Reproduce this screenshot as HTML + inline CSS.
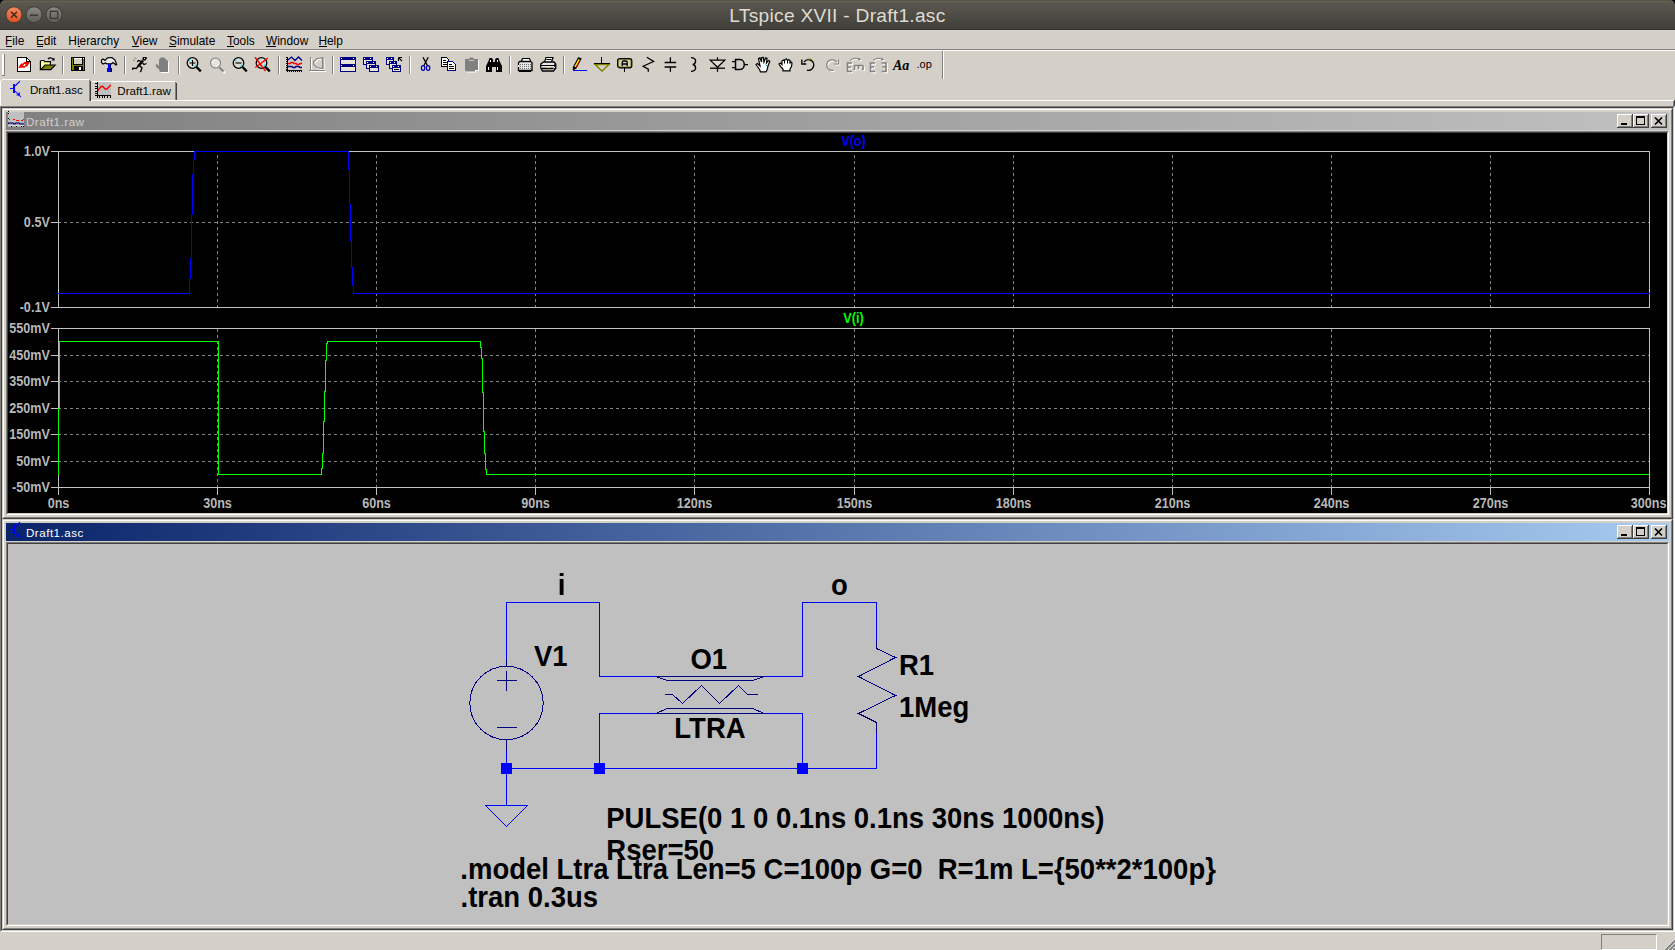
<!DOCTYPE html>
<html>
<head>
<meta charset="utf-8">
<title>LTspice XVII - Draft1.asc</title>
<style>
html,body{margin:0;padding:0;}
body{width:1675px;height:950px;overflow:hidden;background:#d4d0c8;position:relative;font-family:"Liberation Sans",sans-serif;}
.abs{position:absolute;}
#titlebar{left:0;top:0;width:1675px;height:30px;background:#000;}
#titlebar .bg{left:0;top:0;width:1675px;height:30px;border-radius:5px 5px 0 0;background:linear-gradient(#55544c 0px,#55544c 1px,#666250 1px,#666250 2px,#5b5850 2px,#403f3a 29px,#35342f 29px,#35342f 30px);}
#titletext{left:0;top:1px;width:1675px;height:29px;line-height:30px;text-align:center;color:#dfdbd2;font-size:18px;letter-spacing:0.25px;transform:scaleX(1.065);transform-origin:838px 0;}
.wbtn{width:17px;height:17px;border-radius:50%;top:6px;box-sizing:border-box;}
#menubar{left:0;top:29px;width:1675px;height:20px;}
.mi{top:0;height:20px;line-height:23px;font-size:12px;color:#000;white-space:nowrap;}
.mi u{text-decoration:none;border-bottom:1px solid #000;}
#toolbar{left:0;top:51px;width:1675px;height:28px;}
.sep{top:5px;width:1px;height:19px;background:#808080;border-right:1px solid #fff;}
.ico{top:6px;width:16px;height:16px;}
.win{left:2px;width:1671px;height:411px;background:#d4d0c8;box-sizing:border-box;border-style:solid;border-width:1px;border-color:#d4d0c8 #404040 #404040 #d4d0c8;}
.win .in{left:0;top:0;width:1669px;height:409px;box-sizing:border-box;border-style:solid;border-width:1px;border-color:#fff #808080 #808080 #fff;}
.cap{left:3px;top:3px;width:1663px;height:18px;}
.capt{left:20px;top:0px;height:18px;line-height:19px;font-size:11.6px;letter-spacing:0.5px;white-space:nowrap;}
.cbtn{top:2px;width:16px;height:14px;background:#d4d0c8;box-sizing:border-box;border-style:solid;border-width:1px;border-color:#fff #404040 #404040 #fff;}
.cbtn i{position:absolute;left:0;top:0;width:13px;height:11px;box-sizing:border-box;border-style:solid;border-width:0 1px 1px 0;border-color:#808080;}
.client{left:3px;top:22px;width:1663px;height:384px;box-sizing:border-box;border-style:solid;border-width:1px;border-color:#808080 #fff #fff #808080;}
.client .c2{left:0;top:0;width:1661px;height:382px;box-sizing:border-box;border-style:solid;border-width:1px;border-color:#404040 #d4d0c8 #d4d0c8 #404040;}
.yl{left:0;width:48px;text-align:right;font-weight:bold;font-size:13.5px;color:#c0c0c0;line-height:18px;height:18px;white-space:nowrap;}
.xl{font-weight:bold;font-size:13.5px;color:#c0c0c0;line-height:18px;height:18px;white-space:nowrap;}
.st{font-weight:bold;font-size:27.5px;color:#000;line-height:24px;height:24px;white-space:nowrap;}
.stx{font-family:"Liberation Sans",sans-serif;font-weight:bold;font-size:27.5px;fill:#000;white-space:pre;}
.ptx{font-family:"Liberation Sans",sans-serif;font-weight:bold;font-size:13px;white-space:pre;}
.ui{font-family:"Liberation Sans",sans-serif;font-size:11.6px;fill:#000;}
</style>
</head>
<body>
<!-- TITLEBAR -->
<div id="titlebar" class="abs">
  <div class="bg abs"></div>
  <div id="titletext" class="abs">LTspice XVII - Draft1.asc</div>
  <svg class="abs" style="left:0;top:0" width="80" height="29" viewBox="0 0 80 29">
<defs><linearGradient id="gc" x1="0" y1="0" x2="0" y2="1"><stop offset="0" stop-color="#f28a62"/><stop offset="1" stop-color="#de4f21"/></linearGradient><linearGradient id="gg" x1="0" y1="0" x2="0" y2="1"><stop offset="0" stop-color="#8d8c84"/><stop offset="1" stop-color="#5b5a53"/></linearGradient></defs>
<circle cx="14" cy="14.8" r="8" fill="url(#gc)" stroke="#4d392e" stroke-width="1"/>
<circle cx="34" cy="14.8" r="8" fill="url(#gg)" stroke="#3b3a36" stroke-width="1"/>
<circle cx="54" cy="14.8" r="8" fill="url(#gg)" stroke="#3b3a36" stroke-width="1"/>
<path d="M11 11.8L17 17.8M17 11.8L11 17.8" stroke="#3e2a1e" stroke-width="1.5" fill="none"/>
<path d="M30 15.3H38" stroke="#3c3b37" stroke-width="1.6" fill="none"/>
<rect x="50.3" y="11.3" width="7.4" height="7.2" stroke="#3c3b37" stroke-width="1.4" fill="none"/>
</svg>
</div>
<!-- MENUBAR -->
<div id="menubar" class="abs">
<svg class="abs" style="left:0;top:0" width="400" height="20" viewBox="0 29 400 20">
<g class="ui" style="font-size:11.9px">
<text x="5.1" y="45">File</text><text x="35.9" y="45">Edit</text><text x="68.3" y="45">Hierarchy</text><text x="131.8" y="45">View</text>
<text x="169" y="45">Simulate</text><text x="227" y="45">Tools</text><text x="266" y="45">Window</text><text x="318.4" y="45">Help</text>
</g>
<g shape-rendering="crispEdges" fill="#000">
<rect x="6" y="46" width="6" height="1"/><rect x="37" y="46" width="6" height="1"/><rect x="78" y="46" width="2" height="1"/><rect x="132" y="46" width="7" height="1"/>
<rect x="169" y="46" width="7" height="1"/><rect x="227" y="46" width="7" height="1"/><rect x="266" y="46" width="10" height="1"/><rect x="319" y="46" width="8" height="1"/>
</g>
</svg>
</div>
<div class="abs" style="left:0;top:49px;width:1675px;height:1px;background:#808080"></div>
<div class="abs" style="left:0;top:50px;width:1675px;height:1px;background:#fff"></div>
<!-- TOOLBAR -->
<div id="toolbar" class="abs">
<svg class="abs" style="left:0;top:0" width="960" height="28" viewBox="0 51 960 28" shape-rendering="crispEdges">
<rect x="2" y="54" width="3" height="22" fill="#fff"/><rect x="4" y="54" width="1" height="22" fill="#808080"/><rect x="2" y="75" width="3" height="1" fill="#808080"/>
<rect x="62" y="56" width="1" height="18" fill="#808080"/><rect x="63" y="56" width="1" height="18" fill="#fff"/>
<rect x="93" y="56" width="1" height="18" fill="#808080"/><rect x="94" y="56" width="1" height="18" fill="#fff"/>
<rect x="124" y="56" width="1" height="18" fill="#808080"/><rect x="125" y="56" width="1" height="18" fill="#fff"/>
<rect x="178" y="56" width="1" height="18" fill="#808080"/><rect x="179" y="56" width="1" height="18" fill="#fff"/>
<rect x="278" y="56" width="1" height="18" fill="#808080"/><rect x="279" y="56" width="1" height="18" fill="#fff"/>
<rect x="332" y="56" width="1" height="18" fill="#808080"/><rect x="333" y="56" width="1" height="18" fill="#fff"/>
<rect x="409" y="56" width="1" height="18" fill="#808080"/><rect x="410" y="56" width="1" height="18" fill="#fff"/>
<rect x="509" y="56" width="1" height="18" fill="#808080"/><rect x="510" y="56" width="1" height="18" fill="#fff"/>
<rect x="563" y="56" width="1" height="18" fill="#808080"/><rect x="564" y="56" width="1" height="18" fill="#fff"/>
<rect x="942" y="51" width="1" height="28" fill="#808080"/><rect x="943" y="51" width="1" height="28" fill="#fff"/>
<g transform="translate(16,57)"><path d="M1.5 .5H10.5L14.5 4.5V14.5H1.5Z" stroke="#000" fill="#fff" stroke-width="1.2" /><path d="M10.5 .5V4.5H14.5" stroke="#000" fill="none" stroke-width="1" /><path d="M2 10.8L5.2 6.6H7L8.2 5H14L11.2 9.5H9.6L8.6 10.8Z" stroke="none" fill="#ff0000" stroke-width="1" shape-rendering="geometricPrecision"/><path d="M6.9 8.9L8.2 7.1H9.8L8.6 8.9Z" stroke="none" fill="#fff" stroke-width="1" shape-rendering="geometricPrecision"/></g>
<g transform="translate(39,57)"><path d="M1.4 12.6V4L2.4 3.5H4.8L5.8 4.7H11.4V8" stroke="#000" fill="#ffff90" stroke-width="1.2" shape-rendering="geometricPrecision"/><path d="M1.6 12.6L6 8H16.2L11.8 12.6Z" stroke="#000" fill="#808000" stroke-width="1.1" shape-rendering="geometricPrecision"/><path d="M9 2Q11.5 -.5 14.5 2.5" stroke="#000" fill="none" stroke-width="1.2" shape-rendering="geometricPrecision"/><path d="M12.5 3.5H15.5V.5Z" stroke="none" fill="#000" stroke-width="1" shape-rendering="geometricPrecision"/></g>
<g transform="translate(70,57)"><rect x="1" y="0" width="14" height="14" fill="#000"/><rect x="2" y="1" width="12" height="12" fill="#808000"/><rect x="4" y="1" width="8" height="6" fill="#d4d0c8"/><rect x="4" y="1" width="8" height="1" fill="#fff"/><rect x="3" y="1" width="1" height="7" fill="#000"/><rect x="12" y="1" width="1" height="7" fill="#000"/><rect x="4" y="7" width="8" height="1" fill="#000"/><rect x="4" y="9" width="9" height="5" fill="#000"/><rect x="9" y="10" width="2" height="3" fill="#fff"/><rect x="13" y="1" width="1" height="1" fill="#fff"/></g>
<g transform="translate(101,57)"><path d="M.5 3L2 2L4 3.5L6.5 .8L11 .5L14 3L15.7 7.5L15 8L12 5.5L10.5 6.8H6L4.5 6L2 7L.5 5.5Z" stroke="#000" fill="#e8e8e8" stroke-width="1.2" shape-rendering="geometricPrecision"/><rect x="7" y="7" width="3" height="4" fill="#0000ff"/><rect x="9" y="7" width="1" height="4" fill="#000080"/><rect x="6" y="11" width="5" height="4" fill="#0000ff"/><rect x="9" y="11" width="2" height="4" fill="#000080"/></g>
<g transform="translate(132,57)"><path d="M11 .5H14.5L13.5 3H11Z" stroke="#000" fill="#000" stroke-width="1" shape-rendering="geometricPrecision"/><rect x="12" y="1" width="1" height="1" fill="#fff"/><path d="M11 3.5L6 9.5" stroke="#000" fill="none" stroke-width="2.6" shape-rendering="geometricPrecision"/><path d="M9.5 4.5L6.5 3.5L5.2 4.8" stroke="#000" fill="none" stroke-width="1.2" shape-rendering="geometricPrecision"/><path d="M10.5 6L12 7.5L14.5 6.5" stroke="#000" fill="none" stroke-width="1.2" shape-rendering="geometricPrecision"/><path d="M6.5 9L4 11.5L.8 11.2L.6 12.8" stroke="#000" fill="none" stroke-width="1.3" shape-rendering="geometricPrecision"/><path d="M8 9L10 11L9 14L8.2 15" stroke="#000" fill="none" stroke-width="1.3" shape-rendering="geometricPrecision"/><path d="M2.5 .8L4.5 1.8M.8 2.8L3 3.8" stroke="#808080" fill="none" stroke-width="1" shape-rendering="geometricPrecision"/></g>
<g transform="translate(155,57)"><g transform="translate(1,1)"><path d="M.5 8L2 7L4 9V2.5L6 .5H9L13 4V15H5L4 12.5L2 11Z" stroke="none" fill="#fff" stroke-width="1" shape-rendering="geometricPrecision"/></g><path d="M.5 8L2 7L4 9V2.5L6 .5H9L13 4V15H5L4 12.5L2 11Z" stroke="none" fill="#808080" stroke-width="1" shape-rendering="geometricPrecision"/></g>
<g transform="translate(186,57)"><circle cx="6.5" cy="6" r="5.3" stroke="#000" fill="#dad8d0" stroke-width="1.25" shape-rendering="geometricPrecision"/><path d="M10.5 10L14.8 14.3" stroke="#000" fill="none" stroke-width="2.4" shape-rendering="geometricPrecision"/><path d="M2.8 4.5L4.5 2.6M8.5 9.5L10.2 7.6" stroke="#00ffff" fill="none" stroke-width="1.2" shape-rendering="geometricPrecision"/><path d="M3.5 6H9.5M6.5 3V9" stroke="#000" fill="none" stroke-width="1.15" shape-rendering="geometricPrecision"/></g>
<g transform="translate(209,57)"><g transform="translate(1,1)"><path d="M11 11L15 15" stroke="#fff" fill="none" stroke-width="2.2" shape-rendering="geometricPrecision"/></g><circle cx="6.5" cy="6" r="5" stroke="#808080" fill="#e4e2dc" stroke-width="1.1" shape-rendering="geometricPrecision"/><path d="M10.5 10.5L14.5 14.5" stroke="#808080" fill="none" stroke-width="2.2" shape-rendering="geometricPrecision"/><path d="M3.5 6Q4 3.5 6.5 3M7 9.5Q9 9 9.8 6.5" stroke="#fff" fill="none" stroke-width="1" shape-rendering="geometricPrecision"/></g>
<g transform="translate(232,57)"><circle cx="6.5" cy="6" r="5.3" stroke="#000" fill="#dad8d0" stroke-width="1.25" shape-rendering="geometricPrecision"/><path d="M10.5 10L14.8 14.3" stroke="#000" fill="none" stroke-width="2.4" shape-rendering="geometricPrecision"/><path d="M2.8 4.5L4.5 2.6M8.5 9.5L10.2 7.6" stroke="#00ffff" fill="none" stroke-width="1.2" shape-rendering="geometricPrecision"/><path d="M3.5 6H9.5" stroke="#000" fill="none" stroke-width="1.15" shape-rendering="geometricPrecision"/></g>
<g transform="translate(255,57)"><circle cx="6.5" cy="6" r="5.3" stroke="#000" fill="#dad8d0" stroke-width="1.25" shape-rendering="geometricPrecision"/><path d="M10.5 10L14.8 14.3" stroke="#000" fill="none" stroke-width="2.4" shape-rendering="geometricPrecision"/><path d="M2.8 4.5L4.5 2.6M8.5 9.5L10.2 7.6" stroke="#00ffff" fill="none" stroke-width="1.2" shape-rendering="geometricPrecision"/><path d="M0 .3L10.5 14M13 1L.3 10.5" stroke="#ff0000" fill="none" stroke-width="1.4" shape-rendering="geometricPrecision"/></g>
<g transform="translate(286,57)"><rect x="1" y="0" width="1" height="14" fill="#000"/><rect x="0" y="13" width="16" height="1" fill="#000"/><rect x="0" y="0" width="1" height="1" fill="#000"/><rect x="0" y="2" width="1" height="1" fill="#000"/><rect x="0" y="4" width="1" height="1" fill="#000"/><rect x="0" y="6" width="1" height="1" fill="#000"/><rect x="0" y="8" width="1" height="1" fill="#000"/><rect x="0" y="10" width="1" height="1" fill="#000"/><rect x="0" y="12" width="1" height="1" fill="#000"/><rect x="1" y="14" width="1" height="1" fill="#000"/><rect x="3" y="14" width="1" height="1" fill="#000"/><rect x="5" y="14" width="1" height="1" fill="#000"/><rect x="7" y="14" width="1" height="1" fill="#000"/><rect x="9" y="14" width="1" height="1" fill="#000"/><rect x="11" y="14" width="1" height="1" fill="#000"/><rect x="13" y="14" width="1" height="1" fill="#000"/><rect x="15" y="14" width="1" height="1" fill="#000"/><path d="M2 3L5.5 0L9 3.5L12.5 0L16 3.5" stroke="#000080" fill="none" stroke-width="1.25" shape-rendering="geometricPrecision"/><path d="M2 6.5H4L5 5.5H7L8 6.5H10L11 7.5H13L14 6.5H16" stroke="#ff0000" fill="none" stroke-width="1.5" shape-rendering="geometricPrecision"/><path d="M2 9.5H6L7 10.5H9L10 9.5H13L14 10.5H16" stroke="#000080" fill="none" stroke-width="1.6" shape-rendering="geometricPrecision"/></g>
<g transform="translate(309,57)"><g transform="translate(1,1)"><rect x="1" y="0" width="1" height="14" fill="#fff"/><rect x="0" y="13" width="16" height="1" fill="#fff"/><path d="M8 1.5L14 .8V11.5L8 10.5L5 8L4.5 5Z" stroke="#fff" fill="none" stroke-width="1.2" shape-rendering="geometricPrecision"/><path d="M13.5 1V12" stroke="#fff" fill="none" stroke-width="1" shape-rendering="geometricPrecision"/></g><rect x="1" y="0" width="1" height="14" fill="#808080"/><rect x="0" y="13" width="16" height="1" fill="#808080"/><path d="M8 1.5L14 .8V11.5L8 10.5L5 8L4.5 5Z" stroke="#808080" fill="none" stroke-width="1.2" shape-rendering="geometricPrecision"/><path d="M13.5 1V12" stroke="#808080" fill="none" stroke-width="1" shape-rendering="geometricPrecision"/></g>
<g transform="translate(340,57)"><rect x="0" y="0" width="16" height="8" fill="#000080"/><rect x="1" y="3" width="14" height="4" fill="#e8e4d8"/><rect x="1" y="1" width="1" height="1" fill="#fff"/><rect x="13" y="1" width="1" height="1" fill="#fff"/><rect x="0" y="7" width="16" height="8" fill="#000080"/><rect x="1" y="10" width="14" height="4" fill="#e8e4d8"/><rect x="1" y="8" width="1" height="1" fill="#fff"/><rect x="13" y="8" width="1" height="1" fill="#fff"/><rect x="13" y="1" width="1" height="1" fill="#fff"/><rect x="13" y="8" width="1" height="1" fill="#fff"/><rect x="15" y="1" width="1" height="1" fill="#000080"/></g>
<g transform="translate(363,57)"><rect x="0" y="0" width="10" height="8" fill="#000080"/><rect x="1" y="3" width="8" height="4" fill="#e8e4d8"/><rect x="1" y="1" width="1" height="1" fill="#fff"/><rect x="7" y="1" width="1" height="1" fill="#fff"/><rect x="3" y="4" width="10" height="8" fill="#000080"/><rect x="4" y="7" width="8" height="4" fill="#e8e4d8"/><rect x="4" y="5" width="1" height="1" fill="#fff"/><rect x="10" y="5" width="1" height="1" fill="#fff"/><rect x="6" y="8" width="10" height="7" fill="#000080"/><rect x="7" y="11" width="8" height="3" fill="#e8e4d8"/><rect x="7" y="9" width="1" height="1" fill="#fff"/><rect x="13" y="9" width="1" height="1" fill="#fff"/></g>
<g transform="translate(386,57)"><rect x="0" y="0" width="8" height="8" fill="#000080"/><rect x="1" y="3" width="6" height="4" fill="#e8e4d8"/><rect x="1" y="1" width="1" height="1" fill="#fff"/><rect x="5" y="1" width="1" height="1" fill="#fff"/><rect x="3" y="4" width="8" height="8" fill="#000080"/><rect x="4" y="7" width="6" height="4" fill="#e8e4d8"/><rect x="4" y="5" width="1" height="1" fill="#fff"/><rect x="8" y="5" width="1" height="1" fill="#fff"/><rect x="6" y="8" width="9" height="7" fill="#000080"/><rect x="7" y="11" width="7" height="3" fill="#e8e4d8"/><rect x="7" y="9" width="1" height="1" fill="#fff"/><rect x="12" y="9" width="1" height="1" fill="#fff"/><rect x="8" y="12" width="5" height="1" fill="#000"/><path d="M12.5 .5H16M12.5 .5V4M12.5 .5L16 4" stroke="#000" fill="none" stroke-width="1.1" shape-rendering="geometricPrecision"/></g>
<g transform="translate(417,57)"><path d="M6 .3L10.5 8.8M11.2 .3L6.8 8.8" stroke="#000" fill="none" stroke-width="1.3" shape-rendering="geometricPrecision"/><ellipse cx="6.1" cy="11" rx="1.7" ry="2.3" stroke="#0000b0" fill="none" stroke-width="1.2" shape-rendering="geometricPrecision"/><ellipse cx="11.1" cy="11" rx="1.7" ry="2.3" stroke="#0000b0" fill="none" stroke-width="1.2" shape-rendering="geometricPrecision"/></g>
<g transform="translate(440,57)"><path d="M1.5 .5H6.5L8.5 2.5V9.5H1.5Z" stroke="#000" fill="#fff" stroke-width="1" /><rect x="3" y="3" width="3" height="1" fill="#000"/><rect x="3" y="5" width="4" height="1" fill="#000"/><rect x="3" y="7" width="4" height="1" fill="#000"/><path d="M7.5 4.5H12.5L15.5 7.5V13.5H7.5Z" stroke="#000080" fill="#fff" stroke-width="1.4" /><rect x="9" y="7" width="3" height="1" fill="#000"/><rect x="9" y="9" width="5" height="1" fill="#000"/><rect x="9" y="11" width="5" height="1" fill="#000"/></g>
<g transform="translate(463,57)"><g transform="translate(1,1)"><path d="M2 2H6L7 .5H10L11 2H15V13H12V14.5H3L2 13Z" stroke="none" fill="#fff" stroke-width="1" shape-rendering="geometricPrecision"/></g><path d="M2 2H6L7 .5H10L11 2H15V13H12V14.5H3L2 13Z" stroke="none" fill="#808080" stroke-width="1" shape-rendering="geometricPrecision"/><rect x="6" y="3" width="5" height="1" fill="#c8c8c8"/></g>
<g transform="translate(486,57)"><path d="M3.5 1H6L7 3V5H9V3L10 1H12.5L13.5 4L16 9V15H10V10H6V15H0V9L2.5 4Z" stroke="none" fill="#000" stroke-width="1" shape-rendering="geometricPrecision"/><rect x="2" y="10" width="1" height="3" fill="#fff"/><rect x="11" y="10" width="1" height="3" fill="#fff"/><rect x="4" y="3" width="1" height="2" fill="#fff"/><rect x="11" y="3" width="1" height="2" fill="#fff"/></g>
<g transform="translate(517,57)"><path d="M4.5 4L5.5 1.5H12.5L13.5 4" stroke="#000" fill="#fff" stroke-width="1.2" shape-rendering="geometricPrecision"/><path d="M1.5 5.5L3 4.5H13.5L15 5.5V13.5H1.5Z" stroke="#000" fill="#e8e8e8" stroke-width="1.3" shape-rendering="geometricPrecision"/><path d="M3 7.5H13.5M3 9.5H13.5M3 11.5H13.5" stroke="#707070" fill="none" stroke-width="1" stroke-dasharray="1 1"/><rect x="2" y="14" width="12" height="1" fill="#000"/><rect x="1" y="8" width="1" height="2" fill="#fff"/></g>
<g transform="translate(540,57)"><path d="M4.5 5L6 .5H13L11.5 5" stroke="#000" fill="#fff" stroke-width="1.2" shape-rendering="geometricPrecision"/><path d="M6.5 2.5H11.5" stroke="#000" fill="none" stroke-width="1" shape-rendering="geometricPrecision"/><path d="M.8 7L3.5 5H14L15.8 7V11L13.5 14H2.5L.8 11Z" stroke="#000" fill="#e8e8e8" stroke-width="1.3" shape-rendering="geometricPrecision"/><path d="M1 8.5H15.5" stroke="#000" fill="none" stroke-width="1" shape-rendering="geometricPrecision"/><path d="M2 11.5H13.5" stroke="#000" fill="none" stroke-width="1.6" shape-rendering="geometricPrecision"/><rect x="7" y="9.5" width="3" height="1" fill="#e0e000"/><path d="M14 8L15 7M14 10L15.5 8.5M14 12L15.5 10.5" stroke="#000" fill="none" stroke-width="0.8" shape-rendering="geometricPrecision"/></g>
<g transform="translate(571,57)"><path d="M7.5 .8L10 1.8L5 11L2.5 10Z" stroke="#000" fill="#ffff00" stroke-width="1.1" shape-rendering="geometricPrecision"/><path d="M9.3 2.2L4.6 10.8" stroke="#ff0000" fill="none" stroke-width="0.9" shape-rendering="geometricPrecision"/><path d="M7.5 .8L10 1.8L9.5 3L7 2Z" stroke="none" fill="#000" stroke-width="1" shape-rendering="geometricPrecision"/><path d="M2.5 10L2.2 13L5 11Z" stroke="#000" fill="#000" stroke-width="1" shape-rendering="geometricPrecision"/><rect x="2" y="13" width="14" height="1" fill="#0000ff"/></g>
<g transform="translate(594,57)"><rect x="7" y="0" width="1" height="7" fill="#000"/><path d="M1 7.5L8 14L15 7.5Z" stroke="#808000" fill="#d4d0c8" stroke-width="1.4" shape-rendering="geometricPrecision"/><rect x="0" y="6" width="16" height="1" fill="#000"/><rect x="0" y="7" width="16" height="1" fill="#808000"/></g>
<g transform="translate(617,57)"><rect x=".7" y="1.7" width="14" height="9" rx="2" stroke="#000" fill="#d4d0c8" stroke-width="1.4" shape-rendering="geometricPrecision"/><rect x="1.6" y="2.6" width="12.2" height="7.2" rx="1.2" stroke="#808000" fill="none" stroke-width=".8" shape-rendering="geometricPrecision"/><path d="M5.2 9V5L6.2 4H9.2L10.2 5V9M5.2 7H10.2" stroke="#000" fill="none" stroke-width="1.3" shape-rendering="geometricPrecision"/><rect x="7.2" y="11" width="1.2" height="4" fill="#000"/></g>
<g transform="translate(640,57)"><path d="M6.9 .2L13.6 4.5L3.1 9.2L8.3 12.1V14.8" stroke="#000" fill="none" stroke-width="1.3" shape-rendering="geometricPrecision"/></g>
<g transform="translate(663,57)"><path d="M7.4 .2V5.4M7.4 10V14.8" stroke="#000" fill="none" stroke-width="1.3" shape-rendering="geometricPrecision"/><path d="M1.6 5.5H13.2M1.6 10H13.2" stroke="#000" fill="none" stroke-width="1.6" shape-rendering="geometricPrecision"/></g>
<g transform="translate(686,57)"><path d="M5 .6C7.5 .6 9.6 2 9.6 4C9.6 6 8 7.3 6.8 7.5C8 7.7 9.6 9 9.6 11C9.6 13 7.5 14.4 5 14.4" stroke="#000" fill="none" stroke-width="1.4" shape-rendering="geometricPrecision"/></g>
<g transform="translate(709,57)"><path d="M8.5 .2V14.8" stroke="#000" fill="none" stroke-width="1.2" shape-rendering="geometricPrecision"/><path d="M1.2 3.2H15.8L8.5 10.3Z" stroke="#000" fill="#dcdad4" stroke-width="1.2" shape-rendering="geometricPrecision"/><path d="M1 11.2H16" stroke="#000" fill="none" stroke-width="1.3" shape-rendering="geometricPrecision"/></g>
<g transform="translate(732,57)"><path d="M3.5 2.6H8C11 2.6 12.3 5.5 12.3 7.6C12.3 9.7 11 12.6 8 12.6H3.5Z" stroke="#000" fill="#d0cec8" stroke-width="1.5" shape-rendering="geometricPrecision"/><path d="M0 4.6H3.5M0 10.6H3.5M12.3 7.6H16" stroke="#000" fill="none" stroke-width="1.3" shape-rendering="geometricPrecision"/></g>
<g transform="translate(755,57)"><path d="M1 7.5L2.5 6.5L5 9L3.5 1.5L5 .8L6.5 5L6.8 .5L8.3 .3L9 5L10.5 1L12 1.2L11.5 6L13.5 3.5L14.8 4.2L13 9L12 13L11 14.8H5.5L4.5 12.5Z" stroke="#000" fill="#fff" stroke-width="1.2" shape-rendering="geometricPrecision"/><rect x="11" y="8" width="1" height="1" fill="#00c0c0"/></g>
<g transform="translate(778,57)"><path d="M1 7L2.5 6L4 7.5V4L5.5 3L6.5 4L7 2.5L8.5 2L9.5 3.5L10.5 2.8L12 3.5V5L13 4.8L14 6L13.5 9.5L12 12V13.8H5V12L3 10Z" stroke="#000" fill="#fff" stroke-width="1.2" shape-rendering="geometricPrecision"/><path d="M6.5 4V6.5M9.5 3.5V6.5M12 5V7" stroke="#000" fill="none" stroke-width="1" shape-rendering="geometricPrecision"/></g>
<g transform="translate(801,57)"><path d="M3 5.2A5.3 5.3 0 1 1 6 13.2" stroke="#000" fill="none" stroke-width="1.4" shape-rendering="geometricPrecision"/><path d="M.8 2.5V7H5.3" stroke="#000" fill="none" stroke-width="1.3" shape-rendering="geometricPrecision"/><path d="M6.5 2.2A5 5 0 0 1 12.5 4.5" stroke="#808000" fill="none" stroke-width="1" shape-rendering="geometricPrecision"/></g>
<g transform="translate(824,57)"><g transform="translate(1,1)"><path d="M12.5 5.2A5.3 5.3 0 1 0 9.5 13.2" stroke="#fff" fill="none" stroke-width="1.3" shape-rendering="geometricPrecision"/><path d="M14.7 2.5V7H10.2" stroke="#fff" fill="none" stroke-width="1.2" shape-rendering="geometricPrecision"/></g><path d="M12.5 5.2A5.3 5.3 0 1 0 9.5 13.2" stroke="#808080" fill="none" stroke-width="1.3" shape-rendering="geometricPrecision"/><path d="M14.7 2.5V7H10.2" stroke="#808080" fill="none" stroke-width="1.2" shape-rendering="geometricPrecision"/></g>
<g transform="translate(847,57)"><g transform="translate(1,1)"><path d="M5 6H.5V14.5H5M.5 10H4" stroke="#fff" fill="none" stroke-width="1.6" shape-rendering="geometricPrecision"/><path d="M7.5 8.5H16M7.5 8.5V13M11.5 8.5V12M16 8.5V13" stroke="#fff" fill="none" stroke-width="1.6" shape-rendering="geometricPrecision"/><path d="M3 3.5Q7.5 -.5 13.5 2.5" stroke="#fff" fill="none" stroke-width="1" shape-rendering="geometricPrecision"/><path d="M11.5 .5L14 3L10.8 3.6Z" stroke="none" fill="#fff" stroke-width="1" shape-rendering="geometricPrecision"/></g><path d="M5 6H.5V14.5H5M.5 10H4" stroke="#808080" fill="none" stroke-width="1.6" shape-rendering="geometricPrecision"/><path d="M7.5 8.5H16M7.5 8.5V13M11.5 8.5V12M16 8.5V13" stroke="#808080" fill="none" stroke-width="1.6" shape-rendering="geometricPrecision"/><path d="M3 3.5Q7.5 -.5 13.5 2.5" stroke="#808080" fill="none" stroke-width="1" shape-rendering="geometricPrecision"/><path d="M11.5 .5L14 3L10.8 3.6Z" stroke="none" fill="#808080" stroke-width="1" shape-rendering="geometricPrecision"/></g>
<g transform="translate(870,57)"><g transform="translate(1,1)"><path d="M5 6H.5V14.5H5M.5 10H4" stroke="#fff" fill="none" stroke-width="1.6" shape-rendering="geometricPrecision"/><path d="M11.5 6H16V14.5H11.5M16 10H12.5" stroke="#fff" fill="none" stroke-width="1.6" shape-rendering="geometricPrecision"/><path d="M3 3.5Q7.5 -.5 13.5 2.5" stroke="#fff" fill="none" stroke-width="1" shape-rendering="geometricPrecision"/><path d="M11.5 .5L14 3L10.8 3.6Z" stroke="none" fill="#fff" stroke-width="1" shape-rendering="geometricPrecision"/></g><path d="M5 6H.5V14.5H5M.5 10H4" stroke="#808080" fill="none" stroke-width="1.6" shape-rendering="geometricPrecision"/><path d="M11.5 6H16V14.5H11.5M16 10H12.5" stroke="#808080" fill="none" stroke-width="1.6" shape-rendering="geometricPrecision"/><path d="M3 3.5Q7.5 -.5 13.5 2.5" stroke="#808080" fill="none" stroke-width="1" shape-rendering="geometricPrecision"/><path d="M11.5 .5L14 3L10.8 3.6Z" stroke="none" fill="#808080" stroke-width="1" shape-rendering="geometricPrecision"/></g>
<text x="893" y="69.5" style="font-family:'Liberation Serif',serif;font-weight:bold;font-style:italic;font-size:14px" fill="#000" shape-rendering="geometricPrecision">Aa</text>
<text x="916.5" y="68" style="font-family:'Liberation Sans',sans-serif;font-weight:normal;font-size:11px" fill="#000" shape-rendering="geometricPrecision">.op</text>
</svg>
</div>
<!-- TABS -->
<div id="tabs" class="abs" style="left:0;top:79px;width:1675px;height:27px;">
<svg class="abs" style="left:0;top:0" width="1675" height="27" viewBox="0 79 1675 27" shape-rendering="crispEdges">
<rect x="91" y="100" width="1583" height="1" fill="#fff"/><rect x="1674" y="100" width="1" height="6" fill="#404040"/><rect x="1673" y="101" width="1" height="5" fill="#808080"/>
<rect x="0" y="81" width="1" height="25" fill="#fff"/><rect x="1" y="80" width="1" height="1" fill="#fff"/><rect x="2" y="79" width="87" height="1" fill="#fff"/><rect x="89" y="80" width="1" height="21" fill="#808080"/><rect x="90" y="81" width="1" height="20" fill="#404040"/>
<rect x="92" y="81" width="83" height="1" fill="#fff"/><rect x="175" y="82" width="1" height="18" fill="#808080"/><rect x="176" y="83" width="1" height="17" fill="#404040"/>
<g transform="translate(7,81)" shape-rendering="crispEdges"><rect x="3" y="7" width="3" height="1" fill="#0000ff"/><rect x="6" y="3" width="2" height="9" fill="#0000ff"/><path d="M8 5L13 .2" stroke="#0000ff" stroke-width="1.05" fill="none" shape-rendering="geometricPrecision"/><path d="M8 10L14 16" stroke="#0000ff" stroke-width="1.05" fill="none" shape-rendering="geometricPrecision"/><path d="M12.8 11L12.8 14.8L9.2 14.2Z" fill="#0000ff" shape-rendering="geometricPrecision"/></g>
<g transform="translate(95,82)" shape-rendering="crispEdges"><rect x="3" y="0" width="13" height="13" fill="#c0c0c0"/><rect x="2" y="0" width="1" height="16" fill="#000"/><rect x="0" y="13" width="16" height="1" fill="#000"/><rect x="0" y="1" width="2" height="1" fill="#000"/><rect x="0" y="4" width="2" height="1" fill="#000"/><rect x="0" y="6" width="2" height="1" fill="#000"/><rect x="0" y="9" width="2" height="1" fill="#000"/><rect x="0" y="11" width="2" height="1" fill="#000"/><rect x="4" y="14" width="1" height="2" fill="#000"/><rect x="7" y="14" width="1" height="2" fill="#000"/><rect x="9" y="14" width="1" height="2" fill="#000"/><rect x="12" y="14" width="1" height="2" fill="#000"/><rect x="15" y="14" width="1" height="2" fill="#000"/><path d="M3 8.5L6 4.5H8L10 7H12L15.8 3" stroke="#ff0000" stroke-width="1.4" fill="none" shape-rendering="geometricPrecision"/></g>
<text x="30" y="94" class="ui" shape-rendering="auto">Draft1.asc</text>
<text x="117.3" y="95" class="ui" shape-rendering="auto">Draft1.raw</text>
</svg>
</div>
<!-- MDI client border -->
<div class="abs" style="left:0;top:106px;width:1675px;height:826px;box-sizing:border-box;border-style:solid;border-width:1px;border-color:#808080 #fff #fff #808080;">
  <div class="abs" style="left:0;top:0;width:1673px;height:824px;box-sizing:border-box;border-style:solid;border-width:1px;border-color:#404040 #d4d0c8 #d4d0c8 #404040;"></div>
</div>
<!-- PLOT WINDOW -->
<div class="win abs" style="top:108px">
  <div class="in abs"></div>
  <div class="cap abs" style="background:linear-gradient(90deg,#808080,#c0c0c0)">
    <svg class="abs" style="left:2px;top:-1px;overflow:visible" width="16" height="17" viewBox="0 0 16 17"><g transform="translate(0,0)" shape-rendering="crispEdges"><rect x="0" y="1" width="16" height="10" fill="#c0c0c0"/><rect x="0" y="11" width="16" height="5" fill="#a8a8a8"/><rect x="0" y="0" width="1" height="1" fill="#000"/><rect x="0" y="2" width="1" height="1" fill="#000"/><rect x="0" y="7" width="1" height="1" fill="#000"/><rect x="0" y="12" width="1" height="1" fill="#000"/><rect x="3" y="15" width="1" height="1" fill="#000"/><rect x="8" y="15" width="1" height="1" fill="#000"/><rect x="13" y="15" width="1" height="1" fill="#000"/><rect x="15" y="15" width="1" height="1" fill="#000"/><rect x="0" y="14" width="16" height="1" fill="#d8d8d8"/><rect x="1" y="8" width="1" height="1" fill="#ff0000"/><rect x="5" y="8" width="2" height="1" fill="#ff0000"/><rect x="8" y="9" width="3" height="1" fill="#ff0000"/><rect x="13" y="9" width="2" height="1" fill="#ff0000"/><rect x="15" y="8" width="1" height="1" fill="#ff0000"/><path d="M0 12H5L6 13H7L8 12H11L12 13H16" stroke="#000080" stroke-width="1.1" fill="none" shape-rendering="geometricPrecision"/></g></svg>
    <div class="capt abs" style="color:#d4d0c8">Draft1.raw</div>
    <svg class="abs" style="left:1611px;top:0" width="54" height="18" viewBox="0 0 54 18" shape-rendering="crispEdges"><g transform="translate(0,0)"><rect x="0" y="2" width="16" height="14" fill="#404040"/><rect x="0" y="2" width="15" height="13" fill="#fff"/><rect x="1" y="3" width="14" height="12" fill="#808080"/><rect x="1" y="3" width="13" height="11" fill="#d4d0c8"/></g><g transform="translate(16,0)"><rect x="0" y="2" width="16" height="14" fill="#404040"/><rect x="0" y="2" width="15" height="13" fill="#fff"/><rect x="1" y="3" width="14" height="12" fill="#808080"/><rect x="1" y="3" width="13" height="11" fill="#d4d0c8"/></g><g transform="translate(34,0)"><rect x="0" y="2" width="16" height="14" fill="#404040"/><rect x="0" y="2" width="15" height="13" fill="#fff"/><rect x="1" y="3" width="14" height="12" fill="#808080"/><rect x="1" y="3" width="13" height="11" fill="#d4d0c8"/></g>
<rect x="4" y="11" width="6" height="2" fill="#000"/>
<rect x="19" y="4" width="9" height="9" fill="#000"/><rect x="20" y="6" width="7" height="6" fill="#d4d0c8"/>
<path d="M38 5.5L45 12.5M45 5.5L38 12.5" stroke="#000" stroke-width="1.7" fill="none" shape-rendering="geometricPrecision"/>
</svg>
  </div>
  <div class="client abs"><div class="c2 abs"></div></div>
  <svg class="abs" style="left:5px;top:24px" width="1659" height="380" viewBox="8 133 1659 380" shape-rendering="crispEdges">
<rect x="8" y="133" width="1659" height="380" fill="#000"/>
<path d="M217.5 155V307" stroke="#848484" fill="none" stroke-dasharray="3 3"/>
<path d="M217.5 329V487" stroke="#848484" fill="none" stroke-dasharray="3 3"/>
<path d="M376.5 155V307" stroke="#848484" fill="none" stroke-dasharray="3 3"/>
<path d="M376.5 329V487" stroke="#848484" fill="none" stroke-dasharray="3 3"/>
<path d="M535.5 155V307" stroke="#848484" fill="none" stroke-dasharray="3 3"/>
<path d="M535.5 329V487" stroke="#848484" fill="none" stroke-dasharray="3 3"/>
<path d="M694.5 155V307" stroke="#848484" fill="none" stroke-dasharray="3 3"/>
<path d="M694.5 329V487" stroke="#848484" fill="none" stroke-dasharray="3 3"/>
<path d="M854.5 155V307" stroke="#848484" fill="none" stroke-dasharray="3 3"/>
<path d="M854.5 329V487" stroke="#848484" fill="none" stroke-dasharray="3 3"/>
<path d="M1013.5 155V307" stroke="#848484" fill="none" stroke-dasharray="3 3"/>
<path d="M1013.5 329V487" stroke="#848484" fill="none" stroke-dasharray="3 3"/>
<path d="M1172.5 155V307" stroke="#848484" fill="none" stroke-dasharray="3 3"/>
<path d="M1172.5 329V487" stroke="#848484" fill="none" stroke-dasharray="3 3"/>
<path d="M1331.5 155V307" stroke="#848484" fill="none" stroke-dasharray="3 3"/>
<path d="M1331.5 329V487" stroke="#848484" fill="none" stroke-dasharray="3 3"/>
<path d="M1490.5 155V307" stroke="#848484" fill="none" stroke-dasharray="3 3"/>
<path d="M1490.5 329V487" stroke="#848484" fill="none" stroke-dasharray="3 3"/>
<path d="M58 222.5H1649" stroke="#848484" fill="none" stroke-dasharray="3 3"/>
<path d="M58 355.5H1649" stroke="#848484" fill="none" stroke-dasharray="3 3"/>
<path d="M58 381.5H1649" stroke="#848484" fill="none" stroke-dasharray="3 3"/>
<path d="M58 408.5H1649" stroke="#848484" fill="none" stroke-dasharray="3 3"/>
<path d="M58 434.5H1649" stroke="#848484" fill="none" stroke-dasharray="3 3"/>
<path d="M58 461.5H1649" stroke="#848484" fill="none" stroke-dasharray="3 3"/>
<path d="M51 151.5H1650" stroke="#c0c0c0" fill="none"/>
<path d="M51 307.5H1650" stroke="#c0c0c0" fill="none"/>
<path d="M58.5 151V308" stroke="#c0c0c0" fill="none"/>
<path d="M1649.5 151V308" stroke="#c0c0c0" fill="none"/>
<path d="M51 328.5H1650" stroke="#c0c0c0" fill="none"/>
<path d="M51 487.5H1650" stroke="#c0c0c0" fill="none"/>
<path d="M58.5 328V488" stroke="#c0c0c0" fill="none"/>
<path d="M1649.5 328V488" stroke="#c0c0c0" fill="none"/>
<path d="M51 222.5H58" stroke="#c0c0c0" fill="none"/>
<path d="M51 355.5H58" stroke="#c0c0c0" fill="none"/>
<path d="M51 381.5H58" stroke="#c0c0c0" fill="none"/>
<path d="M51 408.5H58" stroke="#c0c0c0" fill="none"/>
<path d="M51 434.5H58" stroke="#c0c0c0" fill="none"/>
<path d="M51 461.5H58" stroke="#c0c0c0" fill="none"/>
<path d="M58.5 487V495" stroke="#c0c0c0" fill="none"/>
<path d="M217.5 487V495" stroke="#c0c0c0" fill="none"/>
<path d="M376.5 487V495" stroke="#c0c0c0" fill="none"/>
<path d="M535.5 487V495" stroke="#c0c0c0" fill="none"/>
<path d="M694.5 487V495" stroke="#c0c0c0" fill="none"/>
<path d="M854.5 487V495" stroke="#c0c0c0" fill="none"/>
<path d="M1013.5 487V495" stroke="#c0c0c0" fill="none"/>
<path d="M1172.5 487V495" stroke="#c0c0c0" fill="none"/>
<path d="M1331.5 487V495" stroke="#c0c0c0" fill="none"/>
<path d="M1490.5 487V495" stroke="#c0c0c0" fill="none"/>
<path d="M1649.5 487V495" stroke="#c0c0c0" fill="none"/>
<path d="M58 293.5H189M189.5 278V294M190.5 258V279M191.5 214V259M192.5 174V215M193.5 159V175M194.5 151V160M194 151.5H349M348.5 151V170M349.5 169V205M350.5 204V241M351.5 240V268M352.5 267V286M353.5 285V294M353 293.5H1650" stroke="#0000ff" fill="none" stroke-width="1"/>
<path d="M58.5 408V475M59.5 341V409M59 341.5H219M218.5 341V475M218 474.5H321M321.5 468V475M322.5 453V469M323.5 421V454M324.5 391V422M325.5 360V392M326.5 343V361M327.5 341V344M327 341.5H481M480.5 341V348M481.5 347V359M482.5 358V393M483.5 392V432M484.5 431V454M485.5 453V470M486.5 469V475M486 474.5H1650" stroke="#00ff00" fill="none" stroke-width="1"/>
<text x="0" y="0" text-anchor="end" transform="translate(49.8,155.8) scale(0.97,1.07)" class="ptx" fill="#b8b8b8">1.0V</text>
<text x="0" y="0" text-anchor="end" transform="translate(49.8,226.8) scale(0.97,1.07)" class="ptx" fill="#b8b8b8">0.5V</text>
<text x="0" y="0" text-anchor="end" transform="translate(49.8,311.8) scale(0.97,1.07)" class="ptx" fill="#b8b8b8">-0.1V</text>
<text x="0" y="0" text-anchor="end" transform="translate(49.8,332.8) scale(0.97,1.07)" class="ptx" fill="#b8b8b8">550mV</text>
<text x="0" y="0" text-anchor="end" transform="translate(49.8,359.8) scale(0.97,1.07)" class="ptx" fill="#b8b8b8">450mV</text>
<text x="0" y="0" text-anchor="end" transform="translate(49.8,385.8) scale(0.97,1.07)" class="ptx" fill="#b8b8b8">350mV</text>
<text x="0" y="0" text-anchor="end" transform="translate(49.8,412.8) scale(0.97,1.07)" class="ptx" fill="#b8b8b8">250mV</text>
<text x="0" y="0" text-anchor="end" transform="translate(49.8,438.8) scale(0.97,1.07)" class="ptx" fill="#b8b8b8">150mV</text>
<text x="0" y="0" text-anchor="end" transform="translate(49.8,465.8) scale(0.97,1.07)" class="ptx" fill="#b8b8b8">50mV</text>
<text x="0" y="0" text-anchor="end" transform="translate(49.8,491.8) scale(0.97,1.07)" class="ptx" fill="#b8b8b8">-50mV</text>
<text x="0" y="0" text-anchor="middle" transform="translate(58.5,508) scale(0.97,1.07)" class="ptx" fill="#b8b8b8">0ns</text>
<text x="0" y="0" text-anchor="middle" transform="translate(217.5,508) scale(0.97,1.07)" class="ptx" fill="#b8b8b8">30ns</text>
<text x="0" y="0" text-anchor="middle" transform="translate(376.5,508) scale(0.97,1.07)" class="ptx" fill="#b8b8b8">60ns</text>
<text x="0" y="0" text-anchor="middle" transform="translate(535.5,508) scale(0.97,1.07)" class="ptx" fill="#b8b8b8">90ns</text>
<text x="0" y="0" text-anchor="middle" transform="translate(694.5,508) scale(0.97,1.07)" class="ptx" fill="#b8b8b8">120ns</text>
<text x="0" y="0" text-anchor="middle" transform="translate(854.5,508) scale(0.97,1.07)" class="ptx" fill="#b8b8b8">150ns</text>
<text x="0" y="0" text-anchor="middle" transform="translate(1013.5,508) scale(0.97,1.07)" class="ptx" fill="#b8b8b8">180ns</text>
<text x="0" y="0" text-anchor="middle" transform="translate(1172.5,508) scale(0.97,1.07)" class="ptx" fill="#b8b8b8">210ns</text>
<text x="0" y="0" text-anchor="middle" transform="translate(1331.5,508) scale(0.97,1.07)" class="ptx" fill="#b8b8b8">240ns</text>
<text x="0" y="0" text-anchor="middle" transform="translate(1490.5,508) scale(0.97,1.07)" class="ptx" fill="#b8b8b8">270ns</text>
<text x="0" y="0" text-anchor="end" transform="translate(1666.5,508) scale(0.97,1.07)" class="ptx" fill="#b8b8b8">300ns</text>
<text x="0" y="0" text-anchor="middle" transform="translate(853.5,146) scale(0.97,1.07)" class="ptx" fill="#0000ff">V(o)</text>
<text x="0" y="0" text-anchor="middle" transform="translate(853.5,323) scale(0.97,1.07)" class="ptx" fill="#00ff00">V(i)</text>
</svg>

</div>
<!-- SCHEMATIC WINDOW -->
<div class="win abs" style="top:519px">
  <div class="in abs"></div>
  <div class="cap abs" style="background:linear-gradient(90deg,#0a246a,#a6caf0)">
    <svg class="abs" style="left:1px;top:-1px;overflow:visible" width="17" height="18" viewBox="0 0 17 18"><g transform="translate(0,0)" shape-rendering="crispEdges"><rect x="3" y="7" width="3" height="1" fill="#0000ff"/><rect x="6" y="3" width="2" height="9" fill="#0000ff"/><path d="M8 5L13 .2" stroke="#0000ff" stroke-width="1.05" fill="none" shape-rendering="geometricPrecision"/><path d="M8 10L14 16" stroke="#0000ff" stroke-width="1.05" fill="none" shape-rendering="geometricPrecision"/><path d="M12.8 11L12.8 14.8L9.2 14.2Z" fill="#0000ff" shape-rendering="geometricPrecision"/></g></svg>
    <div class="capt abs" style="color:#fff">Draft1.asc</div>
    <svg class="abs" style="left:1611px;top:0" width="54" height="18" viewBox="0 0 54 18" shape-rendering="crispEdges"><g transform="translate(0,0)"><rect x="0" y="2" width="16" height="14" fill="#404040"/><rect x="0" y="2" width="15" height="13" fill="#fff"/><rect x="1" y="3" width="14" height="12" fill="#808080"/><rect x="1" y="3" width="13" height="11" fill="#d4d0c8"/></g><g transform="translate(16,0)"><rect x="0" y="2" width="16" height="14" fill="#404040"/><rect x="0" y="2" width="15" height="13" fill="#fff"/><rect x="1" y="3" width="14" height="12" fill="#808080"/><rect x="1" y="3" width="13" height="11" fill="#d4d0c8"/></g><g transform="translate(34,0)"><rect x="0" y="2" width="16" height="14" fill="#404040"/><rect x="0" y="2" width="15" height="13" fill="#fff"/><rect x="1" y="3" width="14" height="12" fill="#808080"/><rect x="1" y="3" width="13" height="11" fill="#d4d0c8"/></g>
<rect x="4" y="11" width="6" height="2" fill="#000"/>
<rect x="19" y="4" width="9" height="9" fill="#000"/><rect x="20" y="6" width="7" height="6" fill="#d4d0c8"/>
<path d="M38 5.5L45 12.5M45 5.5L38 12.5" stroke="#000" stroke-width="1.7" fill="none" shape-rendering="geometricPrecision"/>
</svg>
  </div>
  <div class="client abs"><div class="c2 abs"></div></div>
  <svg class="abs" style="left:5px;top:24px" width="1659" height="380" viewBox="8 544 1659 380" shape-rendering="crispEdges">
<rect x="8" y="544" width="1659" height="380" fill="#c0c0c0"/>
<path d="M506.5 658.5 L506.5 602.5 L599.5 602.5 L599.5 676.5 L655.5 676.5" stroke="#0000ff" fill="none"/>
<path d="M764.5 676.5 L802.5 676.5 L802.5 602.5 L876.5 602.5 L876.5 640.5" stroke="#0000ff" fill="none"/>
<path d="M655.5 713.5 L599.5 713.5 L599.5 768.5" stroke="#0000ff" fill="none"/>
<path d="M764.5 713.5 L802.5 713.5 L802.5 768.5" stroke="#0000ff" fill="none"/>
<path d="M506.5 750.5 L506.5 805.5" stroke="#0000ff" fill="none"/>
<path d="M506.5 768.5 L876.5 768.5 L876.5 732.5" stroke="#0000ff" fill="none"/>
<path d="M485.5 805.5 L527.5 805.5 L506.5 826.5 Z" stroke="#0000ff" fill="none"/>
<rect x="501" y="763" width="11" height="11" fill="#0000ff"/>
<rect x="594" y="763" width="11" height="11" fill="#0000ff"/>
<rect x="797" y="763" width="11" height="11" fill="#0000ff"/>
<path d="M506.5 658.5 L506.5 666.5" stroke="#000080" fill="none"/>
<path d="M506.5 739.5 L506.5 750.5" stroke="#000080" fill="none"/>
<circle cx="506.5" cy="703" r="36.7" stroke="#000080" fill="none"/>
<path d="M496.5 680.5 L516.5 680.5" stroke="#000080" fill="none"/>
<path d="M506.5 670.5 L506.5 690.5" stroke="#000080" fill="none"/>
<path d="M496.5 727.5 L516.5 727.5" stroke="#000080" fill="none"/>
<path d="M876.5 640.5 L876.5 648.5 L895.5 657.5 L858.5 676.5 L895.5 695.5 L858.5 713.5 L876.5 722.5 L876.5 732.5" stroke="#000080" fill="none"/>
<path d="M655.5 676.5 L764.5 676.5" stroke="#000080" fill="none"/>
<path d="M655.5 713.5 L764.5 713.5" stroke="#000080" fill="none"/>
<path d="M655.5 676.5 L667.5 680.5 L752.5 680.5 L764.5 676.5" stroke="#000080" fill="none"/>
<path d="M655.5 713.5 L667.5 708.5 L752.5 708.5 L764.5 713.5" stroke="#000080" fill="none"/>
<path d="M664.5 694.5 L672.5 694.5 L682.5 703.5 L701.5 685.5 L719.5 703.5 L738.5 685.5 L747.5 694.5 L757.5 694.5" stroke="#000080" fill="none"/>
<text x="561.6" y="0" text-anchor="middle" transform="translate(0,595) scale(1,1.04)" class="stx">i</text>
<text x="839.3" y="0" text-anchor="middle" transform="translate(0,595.2) scale(1,1.04)" class="stx">o</text>
<text x="534" y="0" text-anchor="start" transform="translate(0,666) scale(1,1.04)" class="stx">V1</text>
<text x="708.8" y="0" text-anchor="middle" transform="translate(0,668.5) scale(1,1.04)" class="stx">O1</text>
<text x="710" y="0" text-anchor="middle" transform="translate(0,738) scale(1,1.04)" class="stx">LTRA</text>
<text x="899" y="0" text-anchor="start" transform="translate(0,675) scale(1,1.04)" class="stx">R1</text>
<text x="899" y="0" text-anchor="start" transform="translate(0,716.8) scale(1,1.04)" class="stx">1Meg</text>
<text x="606.3" y="0" text-anchor="start" transform="translate(0,827.8) scale(1,1.04)" class="stx">PULSE(0 1 0 0.1ns 0.1ns 30ns 1000ns)</text>
<text x="606.3" y="0" text-anchor="start" transform="translate(0,859.7) scale(1,1.04)" class="stx">Rser=50</text>
<text x="460.3" y="0" text-anchor="start" transform="translate(0,878.9) scale(1,1.04)" class="stx">.model Ltra Ltra Len=5 C=100p G=0&#160; R=1m L={50**2*100p}</text>
<text x="460.5" y="0" text-anchor="start" transform="translate(0,906.8) scale(1,1.04)" class="stx">.tran 0.3us</text>
</svg>
</div>
<!-- STATUS BAR -->
<div id="status" class="abs" style="left:0;top:932px;width:1675px;height:18px;background:#d4d0c8;">
  <div class="abs" style="left:1601px;top:2px;width:56px;height:16px;box-sizing:border-box;border-style:solid;border-width:1px;border-color:#808080 #fff #fff #808080;"></div>
  <svg class="abs" style="left:1659px;top:2px" width="16" height="16" viewBox="0 0 16 16" shape-rendering="crispEdges"><path d="M5 16.5L16.5 5" stroke="#fff" stroke-width="1.2" shape-rendering="geometricPrecision"/><path d="M6.2 16.5L16.5 6.2" stroke="#808080" stroke-width="2" shape-rendering="geometricPrecision"/><path d="M9 16.5L16.5 9" stroke="#fff" stroke-width="1.2" shape-rendering="geometricPrecision"/><path d="M10.2 16.5L16.5 10.2" stroke="#808080" stroke-width="2" shape-rendering="geometricPrecision"/><path d="M13 16.5L16.5 13" stroke="#fff" stroke-width="1.2" shape-rendering="geometricPrecision"/><path d="M14.2 16.5L16.5 14.2" stroke="#808080" stroke-width="2" shape-rendering="geometricPrecision"/></svg>
</div>
</body>
</html>
